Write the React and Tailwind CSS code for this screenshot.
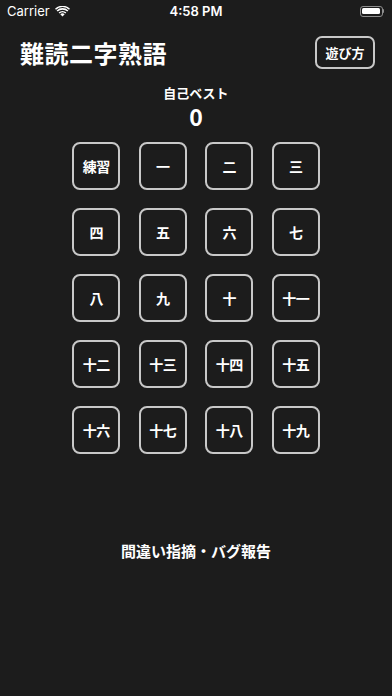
import React from "react";

const rows = [
  ["練習", "一", "二", "三"],
  ["四", "五", "六", "七"],
  ["八", "九", "十", "十一"],
  ["十二", "十三", "十四", "十五"],
  ["十六", "十七", "十八", "十九"],
];

const jp = { fontFamily: '"Noto Sans CJK JP", "Noto Sans", sans-serif' };

export default function App() {
  return (
    <div className="w-[392px] h-[696px] bg-[#1c1c1c] text-white flex flex-col" style={jp}>
      {/* status bar */}
      <div className="h-[22px] flex items-center justify-between px-[7px] relative" style={{ fontFamily: '"Inter", "Liberation Sans", sans-serif' }}>
        <div className="flex items-center gap-[5px] text-[13px] leading-none">
          <span>Carrier</span>
          <svg width="15" height="11" viewBox="0 0 15 11">
            <path d="M7.5 10.5 L5.3 8.2 A3.2 3.2 0 0 1 9.7 8.2 Z" fill="white" />
            <path d="M3.6 6.5 A5.6 5.6 0 0 1 11.4 6.5 L10.3 7.6 A4.1 4.1 0 0 0 4.7 7.6 Z" fill="white" />
            <path d="M1.6 4.5 A8.4 8.4 0 0 1 13.4 4.5 L12.3 5.6 A6.9 6.9 0 0 0 2.7 5.6 Z" fill="white" />
            <path d="M0 2.7 A10.8 10.8 0 0 1 15 2.7 L14 3.7 A9.3 9.3 0 0 0 1 3.7 Z" fill="white" />
          </svg>
        </div>
        <span className="absolute left-1/2 -translate-x-1/2 text-[13px] font-semibold leading-none">4:58 PM</span>
        <div className="flex items-center mr-[1px]">
          <div className="w-[23px] h-[11px] rounded-[3px] border border-[#8e8e8e] p-[1.5px]">
            <div className="w-full h-full bg-white rounded-[1.5px]" />
          </div>
          <div className="w-[1.5px] h-[4px] bg-[#8e8e8e] rounded-r-sm" />
        </div>
      </div>

      {/* header */}
      <div className="flex items-center justify-between pl-[20px] pr-[17px] mt-[14px] h-[33px]">
        <h1 className="text-[24px] font-bold leading-none tracking-[0.5px]">難読二字熟語</h1>
        <button className="w-[60px] h-[33px] border-2 border-[#c8c8c8] rounded-[7px] text-[13px] font-semibold leading-none">遊び方</button>
      </div>

      {/* best */}
      <div className="flex flex-col items-center mt-[17px]">
        <div className="text-[13px] font-semibold leading-none">自己ベスト</div>
        <div className="text-[23px] font-bold leading-none mt-[6px]">0</div>
      </div>

      {/* grid */}
      <div className="flex flex-col items-center gap-[18px] mt-[14px]">
        {rows.map((r, i) => (
          <div key={i} className="flex gap-[18.5px]">
            {r.map((t) => (
              <button
                key={t}
                className="w-[48px] h-[48px] border-2 border-[#c8c8c8] rounded-[8px] flex items-center justify-center text-[14px] font-semibold leading-none tracking-[-0.5px]"
              >
                {t}
              </button>
            ))}
          </div>
        ))}
      </div>

      <div className="flex justify-center mt-[89px]">
        <span className="text-[15px] font-bold leading-none">間違い指摘・バグ報告</span>
      </div>
    </div>
  );
}
